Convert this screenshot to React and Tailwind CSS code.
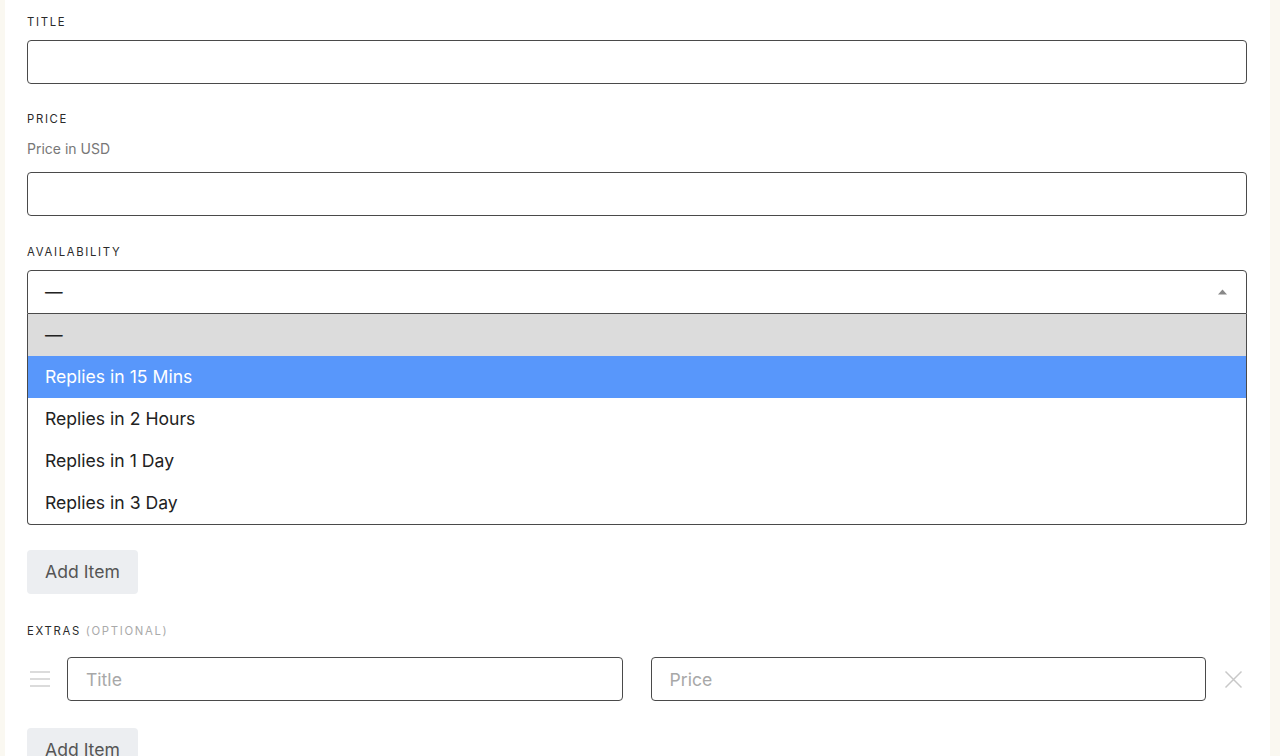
import React from "react";

const font = { fontFamily: "Inter, 'Noto Sans', sans-serif" };

function Label({ children, className = "" }) {
  return (
    <div className={"pt-px text-[11.3px] leading-4 tracking-[0.15em] uppercase text-[#2a2a2a] " + className}>
      {children}
    </div>
  );
}

function TextInput({ placeholder = "", className = "" }) {
  return (
    <input
      placeholder={placeholder}
      className={
        "h-[44px] w-full rounded-[4px] border border-[#4a4a4a] bg-white px-[18px] text-[17.6px] text-[#222] placeholder:text-[#a8a8a8] outline-none " +
        className
      }
    />
  );
}

const options = ["—", "Replies in 15 Mins", "Replies in 2 Hours", "Replies in 1 Day", "Replies in 3 Day"];

export default function App() {
  return (
    <div className="min-h-screen bg-[#faf8f1] pl-[5px] pr-[10px]" style={font}>
      <div className="min-h-screen bg-white pl-[22px] pr-[23px] pt-[13px] pb-10">
        <Label>Title</Label>
        <TextInput className="mt-[10px]" />

        <Label className="mt-[26px]">Price</Label>
        <div className="mt-[12px] text-[14px] leading-5 text-[#777]">Price in USD</div>
        <TextInput className="mt-[13px]" />

        <Label className="mt-[27px]">Availability</Label>
        <div className="relative mt-[10px]">
          <div className="flex h-[44px] items-center justify-between rounded-t-[4px] border border-[#4a4a4a] bg-white pl-[17px] pr-[19px] text-[17.6px] text-[#222]">
            <span>—</span>
            <svg width="9" height="6" viewBox="0 0 9 6">
              <path d="M0 5.5 L4.5 0.5 L9 5.5 Z" fill="#888" />
            </svg>
          </div>
          <div className="absolute left-0 right-0 top-full z-10 rounded-b-[4px] border border-t-0 border-[#4a4a4a] bg-white">
            {options.map((o, i) => (
              <div
                key={o}
                className={
                  "flex h-[42px] items-center pl-[17px] text-[17.6px] " +
                  (i === 0
                    ? "bg-[#dcdcdc] text-[#222]"
                    : i === 1
                    ? "bg-[#5897fb] text-white"
                    : "text-[#222]")
                }
              >
                {o}
              </div>
            ))}
          </div>
        </div>

        <div className="mt-[236px]">
          <button className="h-[44px] rounded-[4px] bg-[#eceef1] px-[18px] text-[17.6px] text-[#555]">
            Add Item
          </button>
        </div>

        <Label className="mt-[28px]">
          Extras <span className="text-[#aaa]">(Optional)</span>
        </Label>
        <div className="mt-[18px] flex items-center">
          <div className="flex w-[40px] shrink-0 items-center pl-[3px]">
            <svg width="20" height="18" viewBox="0 0 20 18">
              <path d="M0 2h20M0 9h20M0 16h20" stroke="#cfcfcf" strokeWidth="1.3" />
            </svg>
          </div>
          <TextInput placeholder="Title" className="flex-1" />
          <div className="w-[28px] shrink-0" />
          <TextInput placeholder="Price" className="flex-1" />
          <div className="flex w-[41px] shrink-0 items-center justify-center pl-[14px]">
            <svg width="19" height="19" viewBox="0 0 19 19">
              <path d="M1.5 1.5 L17.5 17.5 M17.5 1.5 L1.5 17.5" stroke="#c8c8c8" strokeWidth="1.5" />
            </svg>
          </div>
        </div>

        <div className="mt-[27px]">
          <button className="h-[44px] rounded-[4px] bg-[#eceef1] px-[18px] text-[17.6px] text-[#555]">
            Add Item
          </button>
        </div>
      </div>
    </div>
  );
}
